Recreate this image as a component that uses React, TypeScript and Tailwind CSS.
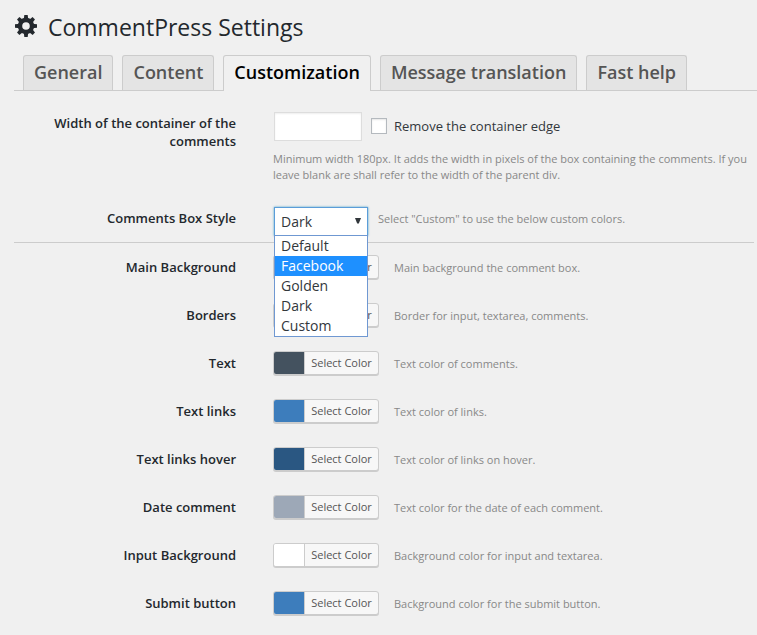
import { useState } from "react";

const tabs = ["General", "Content", "Customization", "Message translation", "Fast help"];

const styles = ["Default", "Facebook", "Golden", "Dark", "Custom"];

const colors = [
  { id: "main-background", label: "Main Background", hint: "Main background the comment box.", color: "#ffffff" },
  { id: "borders", label: "Borders", hint: "Border for input, textarea, comments.", color: "#cccccc" },
  { id: "text", label: "Text", hint: "Text color of comments.", color: "#44525f" },
  { id: "links", label: "Text links", hint: "Text color of links.", color: "#3d7dbc" },
  { id: "links-hover", label: "Text links hover", hint: "Text color of links on hover.", color: "#2a5782" },
  { id: "date", label: "Date comment", hint: "Text color for the date of each comment.", color: "#9da8b7" },
  { id: "input-background", label: "Input Background", hint: "Background color for input and textarea.", color: "#ffffff" },
  { id: "submit", label: "Submit button", hint: "Background color for the submit button.", color: "#3d7dbc" },
];

function GearIcon() {
  const teeth = [0, 45, 90, 135, 180, 225, 270, 315];
  return (
    <svg viewBox="0 0 22 22" className="size-[22px] shrink-0" fill="#23282d" aria-hidden="true">
      {teeth.map((angle) => (
        <path key={angle} d="M9.3 0h3.4l.6 5h-4.6z" transform={`rotate(${angle} 11 11)`} />
      ))}
      <path
        fillRule="evenodd"
        d="M11 2.8a8.2 8.2 0 1 0 0 16.4a8.2 8.2 0 1 0 0-16.4zM11 7.2a3.8 3.8 0 1 1 0 7.6a3.8 3.8 0 1 1 0-7.6z"
      />
    </svg>
  );
}

function StyleSelect() {
  const [value, setValue] = useState("Dark");
  return (
    <div className="relative ml-px w-[94px] shrink-0">
      <select
        id="box-style"
        value={value}
        onChange={(e) => setValue(e.target.value)}
        className="block h-[29px] w-full appearance-none border border-[#5b9dd9] bg-white pl-[6px] text-[14px] text-[#32373c] shadow-[0_0_2px_rgba(30,140,190,0.8)] outline-none"
      >
        {styles.map((s) => (
          <option key={s}>{s}</option>
        ))}
      </select>
      <svg viewBox="0 0 6 6" className="pointer-events-none absolute top-[11px] right-[7px] size-[6px]" fill="#32373c" aria-hidden="true">
        <path d="M0 0h6L3.8 5.6H2.2z" />
      </svg>
      <ul
        role="listbox"
        aria-label="Comments Box Style"
        className="absolute top-7 left-0 z-10 w-full border border-[#6f98d2] bg-white text-[14px] leading-5 text-[#32373c]"
      >
        {styles.map((s) => (
          <li
            key={s}
            role="option"
            aria-selected={s === value}
            onClick={() => setValue(s)}
            className={s === "Facebook" ? "bg-[#1e90ff] pl-[6px] text-white" : "pl-[6px]"}
          >
            {s}
          </li>
        ))}
      </ul>
    </div>
  );
}

export default function App() {
  const [active, setActive] = useState("Customization");
  const label = "w-[222px] shrink-0 text-right text-[13px] leading-[18px] font-semibold text-[#23282d]";
  const hint = "text-[11px] leading-4 text-[#888888]";

  return (
    <main className="min-h-screen bg-[#f0f0f0] pr-[3px] pl-[14px] font-['Open_Sans',sans-serif] text-[#32373c]">
      <header className="flex h-[55px] items-center gap-[11px] pb-[3px] pl-px">
        <GearIcon />
        <h1 className="pt-[2px] text-[23px] leading-8 font-normal text-[#23282d]">CommentPress Settings</h1>
      </header>

      <nav className="-mr-[3px] flex gap-[9px] border-b border-[#cccccc] pl-[9px]">
        {tabs.map((tab) => (
          <button
            key={tab}
            type="button"
            onClick={() => setActive(tab)}
            className={
              tab === active
                ? "-mb-px h-9 rounded-t-[3px] border border-b-0 border-[#cccccc] bg-[#f0f0f0] px-[10px] pb-[3px] text-[18px] font-semibold whitespace-nowrap text-black"
                : "h-[35px] rounded-t-[3px] border border-b-0 border-[#cccccc] bg-[#e4e4e4] px-[10px] pb-[2px] text-[18px] font-semibold whitespace-nowrap text-[#555555]"
            }
          >
            {tab}
          </button>
        ))}
      </nav>

      <form>
        <section className="border-b border-[#cccccc] pt-[21px] pb-[6px]">
          <div className="flex gap-[37px]">
            <label htmlFor="width" className={`${label} pt-[2px]`}>
              Width of the container of the comments
            </label>
            <div className="min-w-0 flex-1">
              <div className="flex items-center">
                <input
                  id="width"
                  type="text"
                  className="ml-px h-[29px] w-[88px] border border-[#dddddd] bg-white px-1 text-[14px] shadow-[inset_0_1px_2px_rgba(0,0,0,0.07)] outline-none"
                />
                <div className="ml-[9px] flex items-center gap-[7px] pb-[2px]">
                  <input
                    id="edge"
                    type="checkbox"
                    className="size-4 appearance-none border border-[#b4b9be] bg-white shadow-[inset_0_1px_2px_rgba(0,0,0,0.1)] checked:bg-[#1e8cbe]"
                  />
                  <label htmlFor="edge" className="text-[13px] leading-[18px]">
                    Remove the container edge
                  </label>
                </div>
              </div>
              <p className={`${hint} mt-[10px]`}>
                Minimum width 180px. It adds the width in pixels of the box containing the comments. If you leave blank
                are shall refer to the width of the parent div.
              </p>
            </div>
          </div>
          <div className="mt-6 flex gap-[37px]">
            <label htmlFor="box-style" className={`${label} pt-[2px]`}>
              Comments Box Style
            </label>
            <div className="flex min-w-0 flex-1 gap-[10px]">
              <StyleSelect />
              <p className={`${hint} pt-1`}>Select "Custom" to use the below custom colors.</p>
            </div>
          </div>
        </section>

        {colors.map((c) => (
          <div key={c.id} className="flex h-12 items-center">
            <label htmlFor={c.id} className={label}>
              {c.label}
            </label>
            <button
              id={c.id}
              type="button"
              className="ml-[37px] flex h-6 w-[106px] shrink-0 overflow-hidden rounded-[3px] border border-[#cccccc] bg-[#f7f7f7] text-[11px] leading-[22px] text-[#555555] shadow-[0_1px_0_#cccccc]"
            >
              <span className="h-full w-[30px] shrink-0" style={{ backgroundColor: c.color }} />
              <span className="flex-1 border-l border-[#cccccc] text-center whitespace-nowrap">Select Color</span>
            </button>
            <p className={`${hint} ml-[15px] pt-px`}>{c.hint}</p>
          </div>
        ))}
      </form>
    </main>
  );
}
